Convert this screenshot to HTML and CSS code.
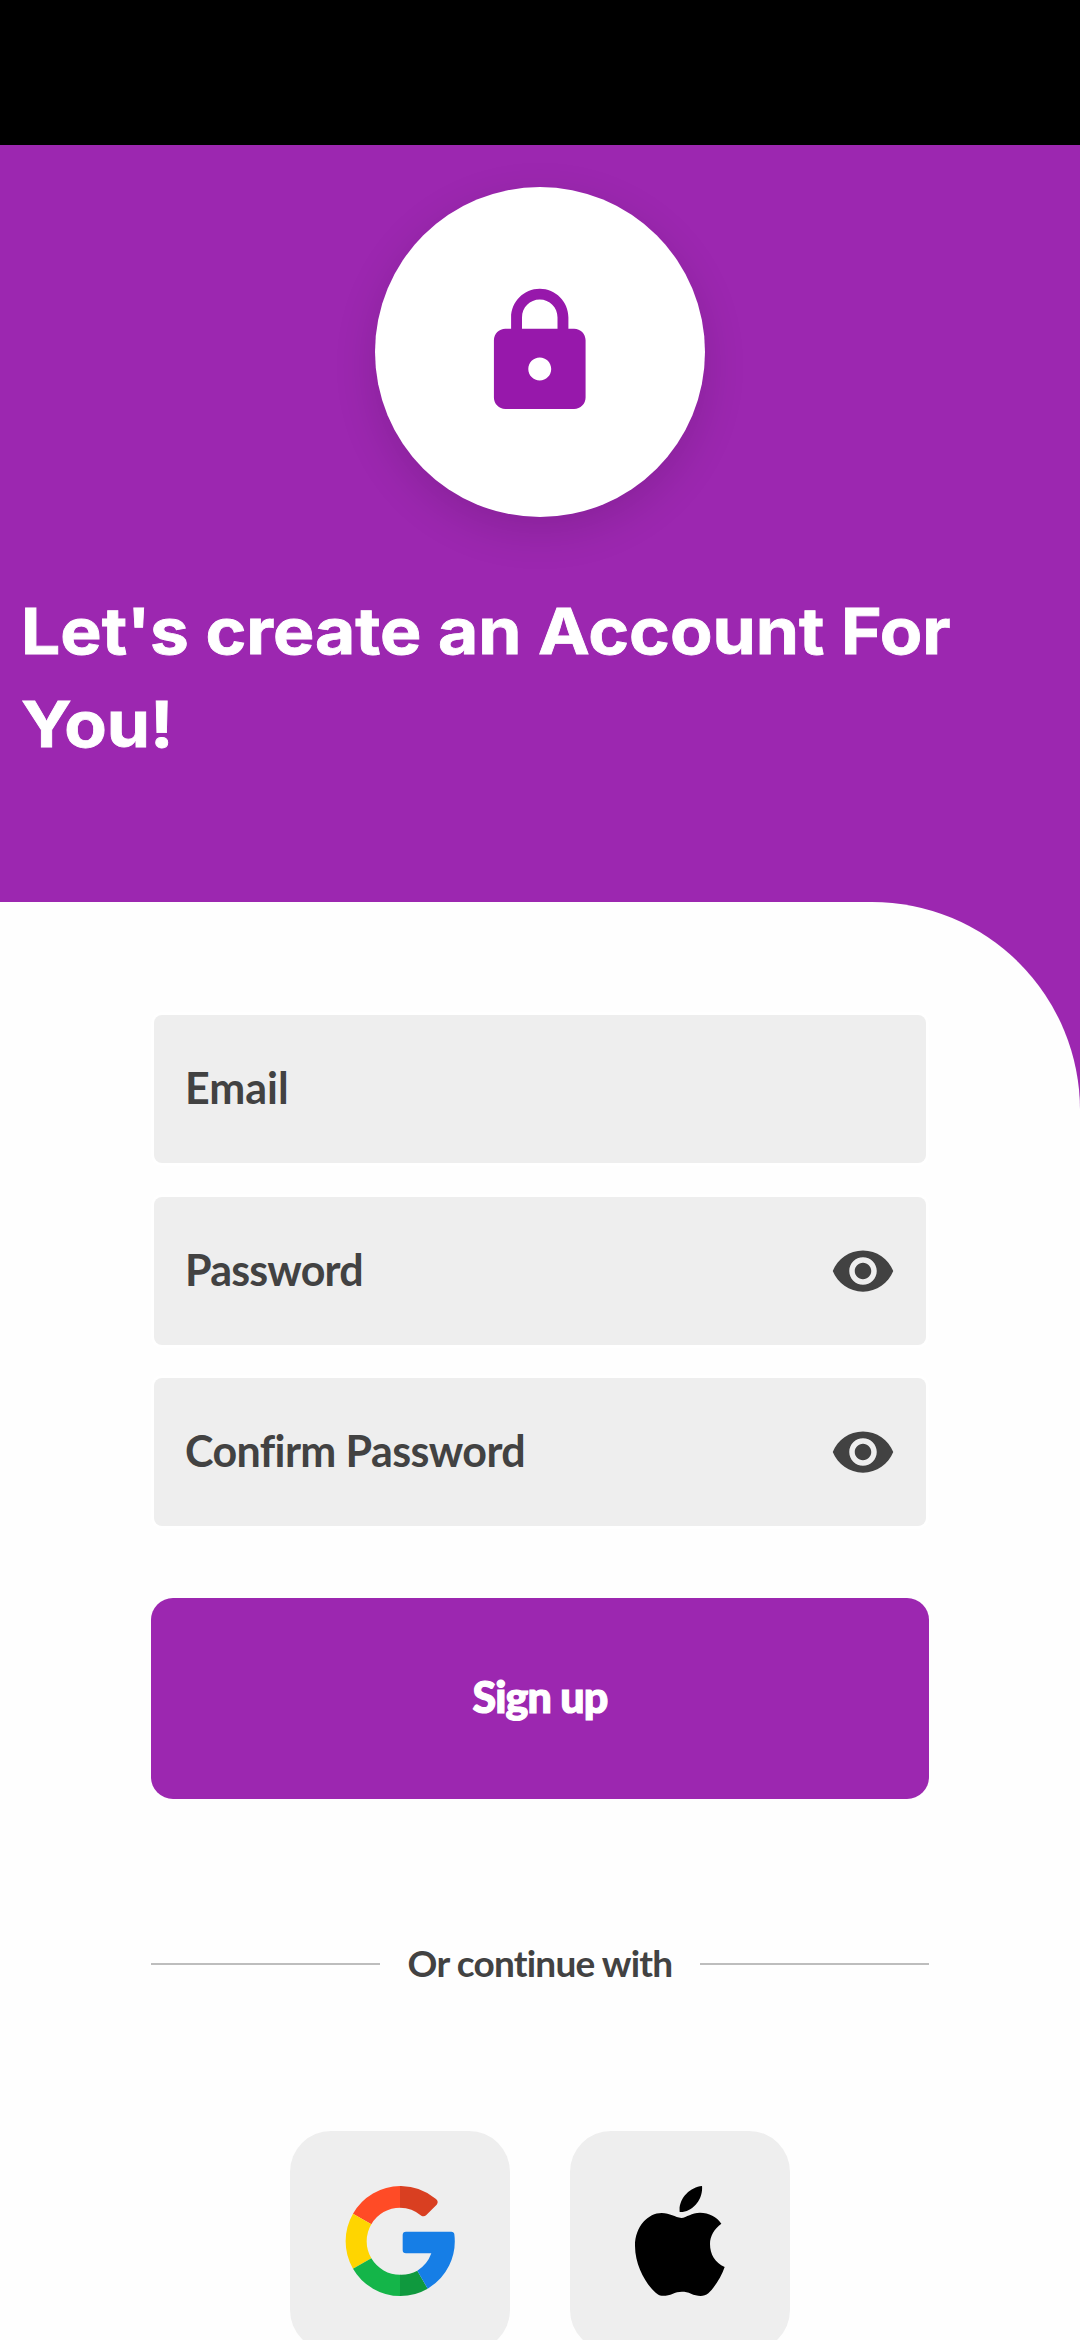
FILE: index.html
```html
<!DOCTYPE html>
<html lang="en">
<head>
<meta charset="utf-8">
<title>Sign up</title>
<link rel="stylesheet" href="styles.css">
</head>
<body>
<div class="status-bar"></div>
<main class="screen">
  <header class="hero">
    <div class="badge">
      <svg class="lock" viewBox="0 0 24 24"><path d="M18 8h-1V6c0-2.76-2.24-5-5-5S7 3.24 7 6v2H6c-1.1 0-2 .9-2 2v10c0 1.1.9 2 2 2h12c1.1 0 2-.9 2-2V10c0-1.1-.9-2-2-2zm-6 9c-1.1 0-2-.9-2-2s.9-2 2-2 2 .9 2 2-.9 2-2 2zm3.1-9H8.9V6c0-1.71 1.39-3.1 3.1-3.1s3.1 1.39 3.1 3.1v2z"/></svg>
    </div>
    <h1 class="title">Let's create an Account For<br>You!</h1>
  </header>
  <section class="sheet">
    <form class="form">
      <div class="field"><span class="label">Email</span></div>
      <div class="field"><span class="label label-password">Password</span>
        <svg class="eye" viewBox="0 0 24 24"><path d="M12 4.5C7 4.5 2.73 7.61 1 12c1.73 4.39 6 7.5 11 7.5s9.27-3.11 11-7.5c-1.73-4.39-6-7.5-11-7.5zM12 17c-2.76 0-5-2.24-5-5s2.24-5 5-5 5 2.24 5 5-2.24 5-5 5zm0-8c-1.66 0-3 1.34-3 3s1.34 3 3 3 3-1.34 3-3-1.34-3-3-3z"/></svg></div>
      <div class="field"><span class="label label-confirm">Confirm Password</span>
        <svg class="eye" viewBox="0 0 24 24"><path d="M12 4.5C7 4.5 2.73 7.61 1 12c1.73 4.39 6 7.5 11 7.5s9.27-3.11 11-7.5c-1.73-4.39-6-7.5-11-7.5zM12 17c-2.76 0-5-2.24-5-5s2.24-5 5-5 5 2.24 5 5-2.24 5-5 5zm0-8c-1.66 0-3 1.34-3 3s1.34 3 3 3 3-1.34 3-3-1.34-3-3-3z"/></svg></div>
    </form>
    <button class="submit" type="button">Sign up</button>
    <div class="divider"><span class="divider-text">Or continue with</span></div>
    <div class="social">
      <div class="tile">
        <svg class="google" viewBox="0 0 330 330">
          <path fill="#ff4b26" d="M166 0A165 165 0 0 0 24 83L79 115A100 100 0 0 1 166 65Z"/>
          <path fill="#d93f21" d="M165 0A165 165 0 0 1 273 39Q282 47 275 56L244 87Q237 94 229 89A100 100 0 0 0 165 65Z"/>
          <path fill="#ffd500" d="M24 83A165 165 0 0 0 24 248L79 217A100 100 0 0 1 79 115Z"/>
          <path fill="#14b549" d="M24 248A165 165 0 0 0 166 330V266A100 100 0 0 1 79 217Z"/>
          <path fill="#0f993e" d="M165 330A165 165 0 0 0 248 308L217 254A100 100 0 0 1 165 266Z"/>
          <path fill="#167ee6" d="M183 137H319Q327 137 328 145A165 165 0 0 1 248 308L217 254A100 100 0 0 0 259 202H183Q173 202 173 192V147Q173 137 183 137Z"/>
        </svg>
      </div>
      <div class="tile">
        <svg class="apple" viewBox="0 0 269 330"><path d="M201 0C205 40 172 80 134 78C130 38 165 3 201 0ZM139 96C120 94 105 81 80 81C40 81 0 120 0 180C0 245 40 305 68 325C78 333 100 329 112 324C130 315 150 315 168 323C185 330 205 334 220 322C240 303 260 270 269 243C240 230 225 205 225 174C225 150 238 128 259 113C245 92 222 80 195 80C170 80 155 94 139 96Z"/></svg>
      </div>
    </div>
  </section>
</main>
</body>
</html>
```
FILE: styles.css
```css
* { box-sizing: border-box; }
body { margin: 0; height: 2340px; overflow: hidden; background: #fefefe; color: #424242; font-family: Lato, sans-serif; font-weight: 700; font-variant-ligatures: none; }
.status-bar { height: 145px; background: #000; }
.screen { height: 2195px; overflow: hidden; background: #9c27b0; }
.hero { height: 757px; padding: 42px 22px 0; }
.badge { width: 330px; height: 330px; margin: 0 auto; border-radius: 50%; background: #fff; box-shadow: 0 14px 44px rgba(0, 0, 0, .13); display: flex; align-items: center; justify-content: center; }
.lock { width: 137.5px; height: 137.5px; fill: #9718ab; }
.title { margin: 67px 0 0 -1px; color: #fff; font: 700 63.5px/93px Inter, sans-serif; white-space: nowrap; transform: scaleX(1.094); transform-origin: left; -webkit-text-stroke: .8px #fff; }
.sheet { height: 1438px; padding: 113px 151px 0; background: #fefefe; border-top-right-radius: 208px; }
.form { display: flex; flex-direction: column; gap: 33.25px; padding: 0 3px; }
.field { height: 148.25px; padding: 0 30px 0 31px; border-radius: 8px; background: #eee; box-shadow: 0 0 0 2.75px #fff; display: flex; align-items: center; justify-content: space-between; font-size: 43px; }
.label { padding-bottom: 3px; }
.label-password { letter-spacing: -.8px; }
.label-confirm { letter-spacing: -.6px; }
.eye { width: 66px; height: 66px; fill: #424242; }
.submit { display: block; width: 100%; height: 201px; margin: 71.5px 0 0; padding: 0 0 3px; border: 0; border-radius: 22px; background: #9c27b0; color: #fff; font: 900 43px Lato, sans-serif; letter-spacing: -.9px; -webkit-text-stroke: 1.2px #fff; }
.divider { height: 60px; margin-top: 135px; display: flex; align-items: center; gap: 27.5px; font-size: 37px; letter-spacing: -.8px; white-space: nowrap; }
.divider-text { padding-bottom: 2px; }
.divider::before, .divider::after { content: ""; flex: 1; height: 1.5px; background: #bdbdbd; }
.social { display: flex; justify-content: center; gap: 60px; margin-top: 137px; }
.tile { width: 220px; height: 220px; border-radius: 41px; background: #eee; display: flex; align-items: center; justify-content: center; }
.google { width: 110px; height: 110px; }
.apple { width: 89.7px; height: 110px; }
```
